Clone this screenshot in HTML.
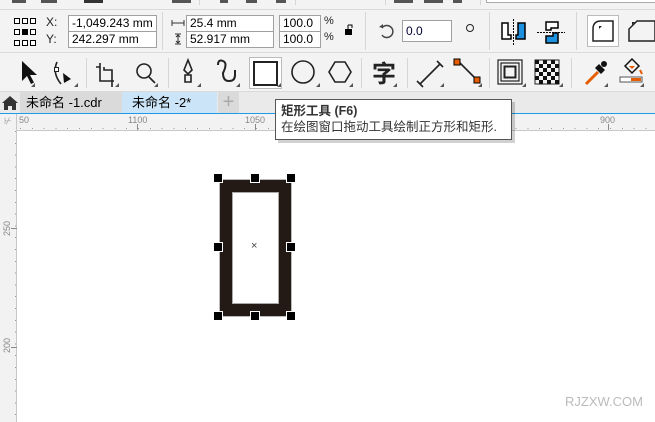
<!DOCTYPE html>
<html><head><meta charset="utf-8"><style>
*{margin:0;padding:0;box-sizing:border-box}
body{width:655px;height:422px;overflow:hidden;background:#fff;font-family:"Liberation Sans","Noto Sans CJK SC",sans-serif;position:relative}
.a{position:absolute}
.bar{background:#f3f3f3}
.in{position:absolute;background:#fff;border:1px solid #a0a0a0;font-size:12px;color:#000;padding-left:3px;line-height:15px;height:17px}
.lb{position:absolute;font-size:12px;color:#222}
.sep{position:absolute;width:1px;background:#d6d6d6}
.tri{position:absolute;width:0;height:0;border-left:4px solid transparent;border-bottom:4px solid #555}
.h{position:absolute;width:10px;height:10px;background:#000;border:1px solid #fff}
.tick{position:absolute;background:#888}
</style></head><body>
<div class="a bar" style="left:0;top:0;width:655px;height:113px"></div>
<div class="a" style="left:0;top:9px;width:655px;height:1px;background:#dadada"></div>
<div class="a" style="left:0;top:52px;width:655px;height:1px;background:#dadada"></div>
<div class="a" style="left:0;top:91px;width:655px;height:1px;background:#dadada"></div>
<div class="a" style="left:12px;top:0;width:14px;height:3px;background:#555"></div>
<div class="a" style="left:41px;top:0;width:16px;height:3px;background:#555"></div>
<div class="a" style="left:84px;top:0;width:19px;height:3px;background:#333"></div>
<div class="a" style="left:172px;top:0;width:19px;height:3px;background:#555"></div>
<div class="a" style="left:220px;top:0;width:8px;height:3px;background:#555"></div>
<div class="a" style="left:246px;top:0;width:11px;height:3px;background:#555"></div>
<div class="a" style="left:276px;top:0;width:10px;height:3px;background:#555"></div>
<div class="a" style="left:394px;top:0;width:19px;height:3px;background:#555"></div>
<div class="a" style="left:424px;top:0;width:19px;height:3px;background:#555"></div>
<div class="a" style="left:453px;top:0;width:9px;height:3px;background:#555"></div>
<div class="a" style="left:486px;top:0;width:170px;height:3px;border:1px solid #aaa;border-top:none;background:#fff"></div>
<div class="sep" style="left:199px;top:0;height:5px"></div><div class="sep" style="left:295px;top:0;height:5px"></div>
<div class="sep" style="left:385px;top:0;height:5px"></div><div class="sep" style="left:480px;top:0;height:5px"></div>

<svg class="a" style="left:13px;top:16px" width="24" height="32" viewBox="0 0 24 32">
<g fill="#fff" stroke="#000" stroke-width="1"><rect x="1.5" y="2.5" width="5" height="5"/><rect x="9.5" y="2.5" width="5" height="5"/><rect x="17.5" y="2.5" width="5" height="5"/><rect x="1.5" y="13.5" width="5" height="5"/><rect x="17.5" y="13.5" width="5" height="5"/><rect x="1.5" y="24.5" width="5" height="5"/><rect x="9.5" y="24.5" width="5" height="5"/><rect x="17.5" y="24.5" width="5" height="5"/></g>
<rect x="9" y="13" width="6" height="6" fill="#000"/></svg>
<div class="lb" style="left:46px;top:15px">X:</div><div class="lb" style="left:46px;top:32px">Y:</div>
<div class="in" style="left:68px;top:15px;width:89px">-1,049.243 mm</div>
<div class="in" style="left:68px;top:31px;width:89px">242.297 mm</div>
<div class="sep" style="left:162px;top:12px;height:38px"></div>
<svg class="a" style="left:171px;top:19px" width="14" height="26"><path d="M1 4h12M1 1v6M13 1v6M7 15v10M4 15h6M4 25h6M5 18l2-2 2 2M5 22l2 2 2-2" stroke="#333" fill="none"/></svg>
<div class="in" style="left:186px;top:15px;width:88px">25.4 mm</div>
<div class="in" style="left:186px;top:31px;width:88px">52.917 mm</div>
<div class="in" style="left:279px;top:15px;width:42px">100.0</div>
<div class="in" style="left:279px;top:31px;width:42px">100.0</div>
<div class="lb" style="left:324px;top:15px;font-size:11px">%</div><div class="lb" style="left:324px;top:31px;font-size:11px">%</div>
<svg class="a" style="left:344px;top:24px" width="10" height="12"><path d="M4 1v4" stroke="#000" fill="none"/><path d="M4 1h4v3" stroke="#000" fill="none"/><rect x="1" y="5" width="7" height="6" fill="#000"/></svg>
<div class="sep" style="left:365px;top:12px;height:38px"></div>
<svg class="a" style="left:378px;top:22px" width="18" height="18"><path d="M4 6A6 6 0 1 1 4 13" stroke="#444" stroke-width="1.5" fill="none"/><path d="M1 5l4 1 0-4z" fill="#444"/></svg>
<div class="in" style="left:402px;top:20px;width:50px;height:22px;line-height:20px;color:#003">0.0</div>
<svg class="a" style="left:465px;top:23px" width="10" height="10"><circle cx="5" cy="5" r="3.5" stroke="#222" fill="none"/></svg>
<div class="sep" style="left:489px;top:12px;height:38px"></div>
<svg class="a" style="left:500px;top:19px" width="30" height="26"><path d="M2 4h6v12h3v4H2z" fill="#fff" stroke="#000" stroke-width="1.5"/><path d="M18 4h7v16h-9v-4h2z" fill="#1e90e0" stroke="#000" stroke-width="1.5"/><path d="M13.5 0v26" stroke="#000" stroke-dasharray="2 1"/></svg>
<svg class="a" style="left:537px;top:19px" width="28" height="26"><path d="M9 3h12v6h-7v2H9z" fill="#fff" stroke="#000" stroke-width="1.5"/><path d="M9 17h7v-3h5v10H9z" fill="#1e90e0" stroke="#000" stroke-width="1.5"/><path d="M0 13.5h28" stroke="#000" stroke-dasharray="2 1"/></svg>
<div class="sep" style="left:576px;top:12px;height:38px"></div>
<div class="a" style="left:587px;top:15px;width:32px;height:32px;border:1px solid #bbb;background:#fff"></div>
<svg class="a" style="left:590px;top:18px" width="26" height="26"><path d="M3 23V11Q3 3 11 3h12v20z" fill="none" stroke="#222" stroke-width="1.5"/><path d="M9 8l3 0-3 3z" fill="#222"/></svg>
<svg class="a" style="left:627px;top:18px" width="28" height="26"><path d="M2 23V11l8-8h18v20z" fill="none" stroke="#222" stroke-width="1.5"/><path d="M5 4l3 0-3 3z" fill="#222"/></svg>

<svg class="a" style="left:0;top:53px" width="655" height="38">
<g fill="none" stroke="#222" stroke-width="1.6">
<path d="M22 8l0 20 5-5 4 8 3-1.5-4-7.5 7 0z" fill="#111" stroke="none"/>
<path d="M57 9q-5 11 4 22"/><rect x="54.5" y="14.5" width="4" height="4" fill="#fff" stroke-width="1"/><path d="M63 20l8 6-7 4z" fill="#111" stroke="none"/>
<path d="M100 10v18h14M104 14v3h8v17M96 14h4"/>
<circle cx="144" cy="18" r="7"/><path d="M149 24l6 6"/>
<path d="M188 7l-4 10 4 4 4-4z"/><path d="M185 22h6v7h-6z"/>
<path d="M218 12q0-6 5-4t0 12q0 8 6 8t6-6v-5" stroke-width="2"/>
<circle cx="303" cy="19" r="11"/>
<path d="M335 9h10l6 10-6 10h-10l-6-10z"/>
<path d="M420 31l20-20M417 28l6 6M437 8l6 6"/>
<path d="M459 9l16 16"/>
<rect x="498" y="7" width="24" height="24" stroke-width="1.2"/><rect x="501" y="10" width="18" height="18" stroke-width="1.2"/><rect x="504.5" y="13.5" width="11" height="11" stroke-width="2"/>
<rect x="535" y="7" width="24" height="24" stroke-width="1"/>
</g>
<rect x="454" y="6" width="6" height="6" fill="#e65c00" stroke="#000"/><rect x="474" y="24" width="6" height="6" fill="#e65c00" stroke="#000"/>
<g fill="#111"><rect x="535" y="7" width="4" height="4"/><rect x="543" y="7" width="4" height="4"/><rect x="551" y="7" width="4" height="4"/><rect x="539" y="11" width="4" height="4"/><rect x="547" y="11" width="4" height="4"/><rect x="555" y="11" width="4" height="4"/><rect x="535" y="15" width="4" height="4"/><rect x="543" y="15" width="4" height="4"/><rect x="551" y="15" width="4" height="4"/><rect x="539" y="19" width="4" height="4"/><rect x="547" y="19" width="4" height="4"/><rect x="555" y="19" width="4" height="4"/><rect x="535" y="23" width="4" height="4"/><rect x="543" y="23" width="4" height="4"/><rect x="551" y="23" width="4" height="4"/><rect x="539" y="27" width="4" height="4"/><rect x="547" y="27" width="4" height="4"/><rect x="555" y="27" width="4" height="4"/></g>
<path d="M586 31l12-12" stroke="#e65c00" stroke-width="3"/><path d="M595 15l6 6 4-4-6-6z" fill="#111"/><circle cx="604" cy="11" r="3" fill="#111"/>
<path d="M632 6l-7 7 7 7 7-7z" fill="none" stroke="#111" stroke-width="1.5"/><path d="M629 13l3 3 3-3z" fill="#e65c00"/><rect x="620" y="24" width="22" height="5" fill="#fff" stroke="#555"/><rect x="631" y="25" width="10" height="3" fill="#e65c00"/><path d="M640 17l2 4" stroke="#e65c00" stroke-width="2"/>
</svg>
<div class="a" style="left:249px;top:57px;width:33px;height:32px;border:1px solid #bbb;background:#fff"></div>
<div class="a" style="left:253px;top:61px;width:25px;height:25px;border:2px solid #222"></div>
<div class="a" style="left:372px;top:57px;font-size:24px;font-weight:bold;color:#222;font-family:'Noto Sans CJK SC',sans-serif;line-height:30px">字</div>
<div class="tri" style="left:31px;top:83px"></div><div class="tri" style="left:74px;top:83px"></div><div class="tri" style="left:115px;top:83px"></div><div class="tri" style="left:154px;top:83px"></div><div class="tri" style="left:197px;top:83px"></div><div class="tri" style="left:236px;top:83px"></div><div class="tri" style="left:277px;top:83px"></div><div class="tri" style="left:316px;top:83px"></div><div class="tri" style="left:349px;top:83px"></div><div class="tri" style="left:393px;top:83px"></div><div class="tri" style="left:440px;top:83px"></div><div class="tri" style="left:478px;top:83px"></div><div class="tri" style="left:522px;top:83px"></div><div class="tri" style="left:559px;top:83px"></div><div class="tri" style="left:604px;top:83px"></div><div class="tri" style="left:640px;top:83px"></div>
<div class="sep" style="left:86px;top:58px;height:30px"></div><div class="sep" style="left:168px;top:58px;height:30px"></div><div class="sep" style="left:361px;top:58px;height:30px"></div><div class="sep" style="left:407px;top:58px;height:30px"></div><div class="sep" style="left:489px;top:58px;height:30px"></div><div class="sep" style="left:571px;top:58px;height:30px"></div>

<div class="a" style="left:0;top:92px;width:655px;height:21px;background:#eaeaea"></div>
<svg class="a" style="left:1px;top:95px" width="18" height="15"><path d="M9 1L1 8h2v7h4v-4h4v4h4V8h2z" fill="#333"/></svg>
<div class="a" style="left:20px;top:92px;width:102px;height:21px;background:#dadada;font-size:13px;line-height:21px;padding-left:6px">未命名 -1.cdr</div>
<div class="a" style="left:122px;top:92px;width:95px;height:21px;background:#cce4f7;font-size:13px;line-height:21px;padding-left:10px">未命名 -2*</div>
<div class="a" style="left:218px;top:92px;width:21px;height:21px;background:#dadada;color:#aaa;font-size:20px;line-height:20px;text-align:center">+</div>
<div class="a" style="left:0;top:113px;width:655px;height:1px;background:#1e9be8"></div>

<div class="a" style="left:0;top:114px;width:655px;height:17px;background:#f2f2f2;border-bottom:1px solid #c8c8c8"></div>
<div class="a" style="left:0;top:114px;width:17px;height:308px;background:#f2f2f2;border-right:1px solid #c8c8c8"></div>
<div class="a" style="left:4px;top:116px;font-size:9px;color:#999">⊬</div>
<div class="a" style="left:19px;top:115px;font-size:9px;color:#888">50</div>
<div class="a" style="left:128px;top:115px;font-size:9px;color:#888">1100</div>
<div class="a" style="left:245px;top:115px;font-size:9px;color:#888">1050</div>
<div class="a" style="left:600px;top:115px;font-size:9px;color:#888">900</div>
<div class="tick" style="left:137px;top:124px;width:1px;height:6px"></div><div class="tick" style="left:255px;top:124px;width:1px;height:6px"></div><div class="tick" style="left:608px;top:124px;width:1px;height:6px"></div>
<div class="a" style="left:20px;top:128px;width:635px;height:1px;background:repeating-linear-gradient(90deg,#999 0 1px,transparent 1px 11.8px)"></div>
<div class="a" style="left:15px;top:131px;width:1px;height:291px;background:repeating-linear-gradient(180deg,#999 0 1px,transparent 1px 11.8px)"></div>
<div class="a" style="left:2px;top:236px;font-size:9px;color:#888;transform:rotate(-90deg);transform-origin:left top">250</div>
<div class="a" style="left:2px;top:353px;font-size:9px;color:#888;transform:rotate(-90deg);transform-origin:left top">200</div>
<div class="tick" style="left:11px;top:228px;width:6px;height:1px"></div><div class="tick" style="left:11px;top:347px;width:6px;height:1px"></div>

<div class="a" style="left:219px;top:179px;width:73px;height:138px;background:#231a15;border:1px solid #bbb"></div>
<div class="a" style="left:232px;top:192px;width:47px;height:112px;background:#fff;border:1px solid #aaa"></div>
<div class="h" style="left:213px;top:173px"></div><div class="h" style="left:250px;top:173px"></div><div class="h" style="left:286px;top:173px"></div>
<div class="h" style="left:213px;top:242px"></div><div class="h" style="left:286px;top:242px"></div>
<div class="h" style="left:213px;top:311px"></div><div class="h" style="left:250px;top:311px"></div><div class="h" style="left:286px;top:311px"></div>
<div class="a" style="left:251px;top:240px;font-size:11px;color:#444">×</div>

<div class="a" style="left:278px;top:102px;width:237px;height:41px;background:rgba(0,0,0,0.18)"></div>
<div class="a" style="left:275px;top:99px;width:237px;height:41px;background:#fff;border:1px solid #555;padding:3px 0 0 5px;font-size:12.5px;line-height:16px;color:#333;white-space:nowrap">
<div style="font-weight:bold">矩形工具 (F6)</div><div>在绘图窗口拖动工具绘制正方形和矩形.</div></div>

<div class="a" style="left:565px;top:394px;font-size:13px;color:#bbb">RJZXW.COM</div>
</body></html>
